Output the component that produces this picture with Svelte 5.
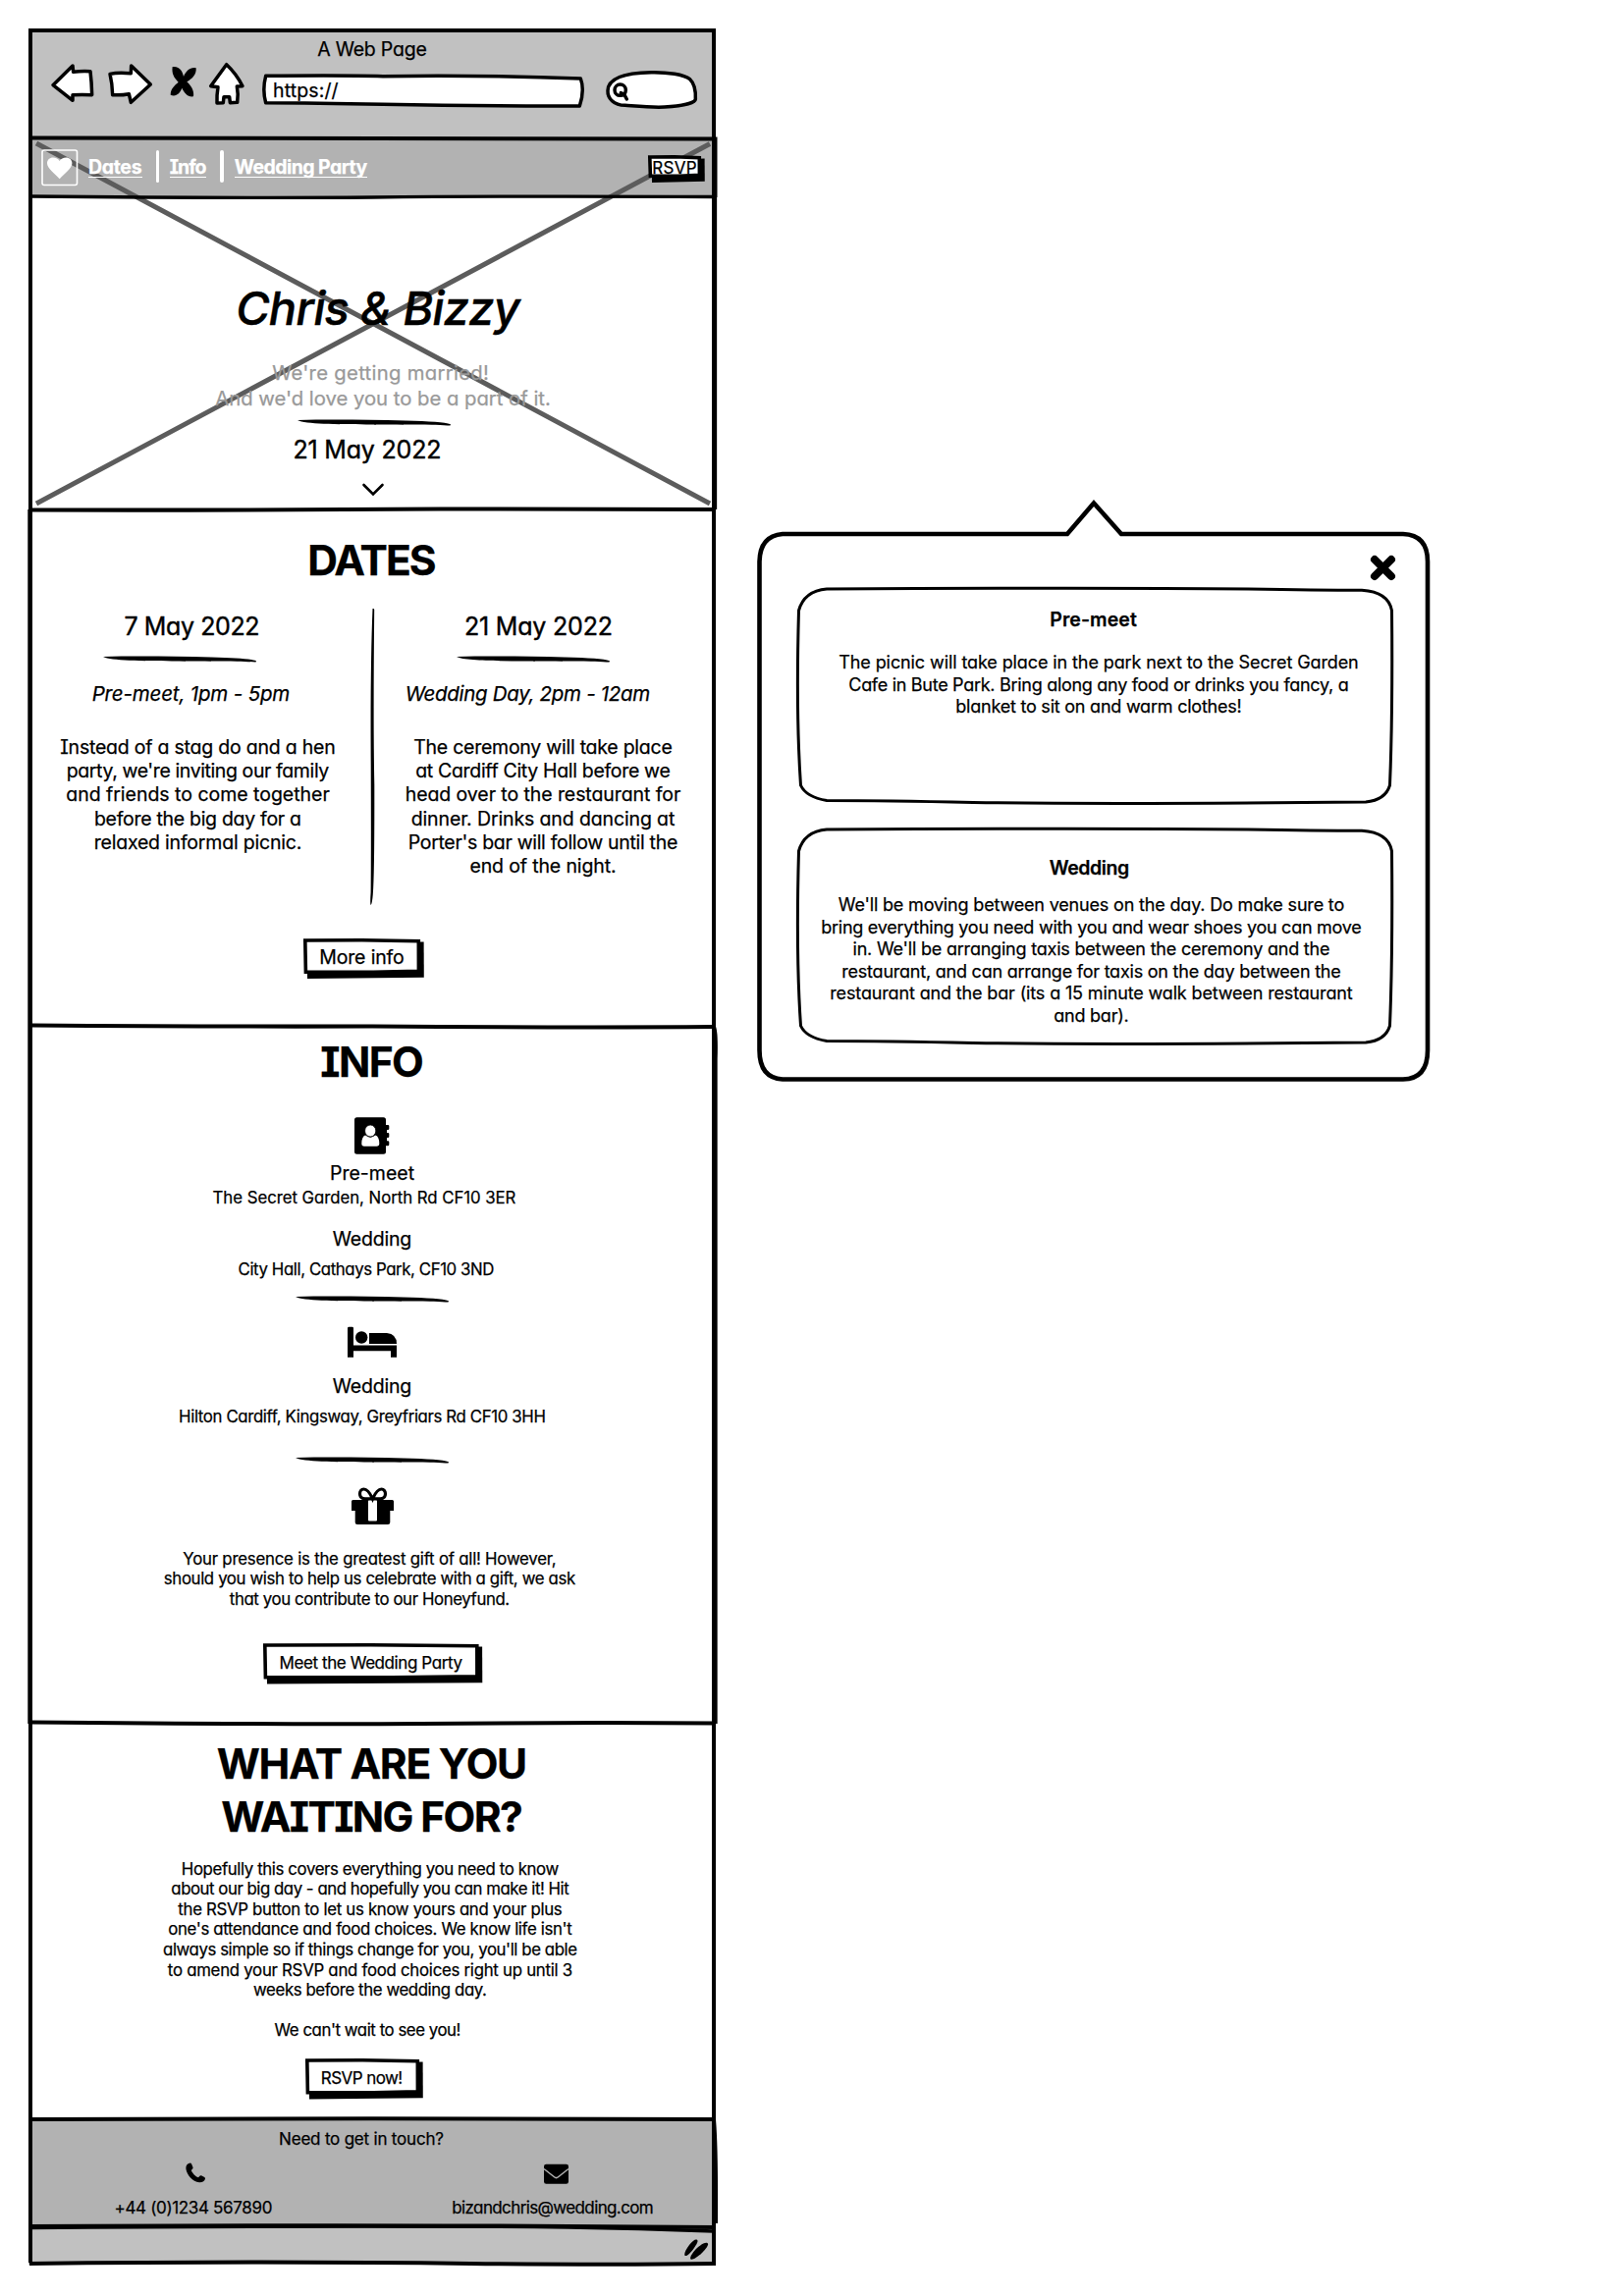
<script>
  // Each line of copy carries the width it should occupy on the wireframe.
  const preMeetCopy = [
    ['Instead of a stag do and a hen', 279],
    ["party, we're inviting our family", 266],
    ['and friends to come together', 267],
    ['before the big day for a', 209.5],
    ['relaxed informal picnic.', 210]
  ];
  const weddingCopy = [
    ['The ceremony will take place', 262],
    ['at Cardiff City Hall before we', 258],
    ['head over to the restaurant for', 279],
    ['dinner. Drinks and dancing at', 267],
    ["Porter's bar will follow until the", 273],
    ['end of the night.', 147.5]
  ];
  const giftCopy = [
    ['Your presence is the greatest gift of all! However,', 379],
    ['should you wish to help us celebrate with a gift, we ask', 418],
    ['that you contribute to our Honeyfund.', 284]
  ];
  const waitingCopy = [
    ['Hopefully this covers everything you need to know', 383],
    ['about our big day - and hopefully you can make it! Hit', 404],
    ['the RSVP button to let us know yours and your plus', 390],
    ["one's attendance and food choices. We know life isn't", 410],
    ["always simple so if things change for you, you'll be able", 420.5],
    ['to amend your RSVP and food choices right up until 3', 411],
    ['weeks before the wedding day.', 236.5]
  ];
  const cards = [
    {
      kind: 'first',
      title: ['Pre-meet', 87],
      lines: [
        ['The picnic will take place in the park next to the Secret Garden', 528],
        ['Cafe in Bute Park. Bring along any food or drinks you fancy, a', 508],
        ['blanket to sit on and warm clothes!', 290]
      ]
    },
    {
      kind: 'second',
      title: ['Wedding', 80],
      lines: [
        ["We'll be moving between venues on the day. Do make sure to", 514],
        ['bring everything you need with you and wear shoes you can move', 549],
        ["in. We'll be arranging taxis between the ceremony and the", 484.5],
        ['restaurant, and can arrange for taxis on the day between the', 507],
        ['restaurant and the bar (its a 15 minute walk between restaurant', 531],
        ['and bar).', 75]
      ]
    }
  ];

  // Spreads or tightens a line's letters so that it fills the given width.
  function fit(node, width) {
    const size = parseFloat(getComputedStyle(node).fontSize);
    const natural = node.getBoundingClientRect().width;
    const count = node.textContent.length;
    const spacing = (width + size * 0.08 - natural) / (count - 1);
    node.style.letterSpacing = `${spacing}px`;
    node.style.marginRight = `${-spacing}px`;
  }
</script>

{#snippet line(text, width)}<span class="fit" use:fit={width}>{text}</span>{/snippet}

{#snippet copy(lines)}
  {#each lines as [text, width]}
    <span class="row">{@render line(text, width)}</span>
  {/each}
{/snippet}

{#snippet squiggle(name)}
  <svg class="squiggle {name}" viewBox="0 0 156 7" width="156" height="7">
    <path d="M0 1C30 .3 70 .5 110 1.600C135 2.300 150 3.200 156 5.200L155.500 6.500C140 5.200 110 5.900 70 5.400C40 5.200 8 5.200 0 1Z" />
  </svg>
{/snippet}

{#snippet sketchButton(name, text, width, w, h)}
  <button class="btn {name}">
    <svg class="btn-ink" viewBox="0 0 {w + 6} {h + 6}" width={w + 6} height={h + 6}>
      <path d="M3.500 5L{w + 3.6} 3.500L{w + 3.8} {h + 3.8}L4 {h + 5}Z" />
      <path class="face" d="M1.800 2L{w / 2} 1.800L{w - 1.700} 2.800L{w - 1.600} {h - 2.700}L{w * 0.6} {h - 1.700}L2.400 {h - 1.800}Z" />
    </svg>
    <span class="btn-label">{@render line(text, width)}</span>
  </button>
{/snippet}

<div class="board">
  <div class="browser">
    <header class="chrome">
      <div class="title">{@render line('A Web Page', 110)}</div>
      <div class="toolbar">
        <svg class="tool" viewBox="90 120 141 150" width="47" height="50">
          <path d="M102 200L162 141L164 160Q190 156 216 158Q220 190 221 230Q190 229 162 230L162 247Q130 222 102 200Z" />
        </svg>
        <svg class="tool forward" viewBox="264 120 147 150" width="49" height="50">
          <path d="M276 166Q300 160 340 164L341 141L400 198L340 253L334 227Q310 232 284 230Q283 195 276 166Z" />
        </svg>
        <svg class="stop" viewBox="456 120 90 150" width="30" height="50">
          <path d="M467 144C489 141 498 158 501 174C508 157 522 144 539 148C541 168 526 182 511 190C524 202 534 218 531 235C514 238 503 224 496 209C490 224 478 238 461 230C461 210 475 200 485 191C472 178 464 165 467 144Z" />
        </svg>
        <svg class="tool home" viewBox="573 120 117 150" width="39" height="50">
          <path d="M632 137L584 203L606 206Q602 230 603 255L622 254L624 236L641 236L643 254L665 253Q669 230 664 204L681 203Q662 165 632 137Z" />
        </svg>
        <div class="url">
          <svg class="tool under" viewBox="738 120 990 150" width="330" height="50">
            <path d="M752 172Q1000 170 1110 173Q1430 169 1714 180Q1727 215 1711 264Q1430 265 1110 259Q900 254 752 254Q741 215 752 172Z" />
          </svg>
          <span class="address">{@render line('https://', 65)}</span>
        </div>
        <svg class="tool search" viewBox="705 120 291 150" width="97" height="50">
          <path d="M770 262C735 262 716 240 717 217C718 175 780 162 850 161C900 160 950 168 968 182C982 195 986 220 985 243C984 256 940 264 890 267C850 269 800 264 770 262Z" />
          <circle cx="755" cy="215" r="17" />
          <path d="M757 224L767 228L775 243" />
        </svg>
      </div>
    </header>

    <nav class="nav">
      <svg class="heart" viewBox="0 0 38 38" width="38" height="38">
        <rect x="1" y="1" width="35.500" height="35.500" rx="2" />
        <path d="M18.700 30.300C14 25 6 19.500 6 14.200C6 10.600 8.600 8.400 12 8.400C15 8.400 17.500 9.800 18.700 12C20 9.800 22.400 8.400 25.400 8.400C28.800 8.400 31.400 10.600 31.400 14.200C31.400 19.500 23.400 25 18.700 30.300Z" />
      </svg>
      <a class="link" href="#dates">{@render line('Dates', 53)}</a>
      <i class="bar"></i>
      <a class="link" href="#info">{@render line('Info', 36)}</a>
      <i class="bar"></i>
      <a class="link" href="#party">{@render line('Wedding Party', 134)}</a>
      {@render sketchButton('rsvp', 'RSVP', 44, 54, 23)}
    </nav>

    <section class="hero">
      <h1>{@render line('Chris & Bizzy', 286)}</h1>
      <p class="tagline">
        <span class="row invite">{@render line("We're getting married!", 219)}</span>
        <span class="row">{@render line("And we'd love you to be a part of it.", 340)}</span>
      </p>
      {@render squiggle('in-hero')}
      <div class="date">{@render line('21 May 2022', 149)}</div>
      <svg class="chevron" viewBox="0 0 22 14" width="22" height="14">
        <path d="M1.500 2L11 11.500L20.500 2" />
      </svg>
    </section>

    <section class="dates" id="dates">
      <h2>{@render line('DATES', 128)}</h2>
      <div class="columns">
        <div class="column left">
          <div class="date">{@render line('7 May 2022', 136)}</div>
          {@render squiggle('in-column')}
          <div class="slot">{@render line('Pre-meet, 1pm - 5pm', 200)}</div>
          <p>{@render copy(preMeetCopy)}</p>
        </div>
        <svg class="divider" viewBox="0 0 15 303" width="15" height="303">
          <path d="M8.500 1Q10 .5 10.200 2Q9 120 10.300 180Q10.500 270 8.800 292Q8 302 6.600 303Q5.800 302 6.600 290Q7 250 6.700 160Q6 60 8.500 1Z" />
        </svg>
        <div class="column right">
          <div class="date">{@render line('21 May 2022', 149)}</div>
          {@render squiggle('in-column')}
          <div class="slot">{@render line('Wedding Day, 2pm - 12am', 248)}</div>
          <p>{@render copy(weddingCopy)}</p>
        </div>
      </div>
      {@render sketchButton('more', 'More info', 85, 119, 36)}
    </section>

    <section class="info" id="info">
      <h2>{@render line('INFO', 102)}</h2>
      <svg class="book" viewBox="0 0 36 38" width="36" height="38">
        <rect x="0" y=".3" width="32" height="37.400" rx="2.500" />
        <path d="M31 8H34Q35.300 8 35.300 9V12Q35.300 13 34 13H33V16H34Q35.300 16 35.300 17V20Q35.300 21 34 21H33V24.300H34Q35.300 24.300 35.300 25.300V28Q35.300 29.300 34 29.300H31Z" />
        <path class="paper" d="M11 18.500Q16.200 22.800 21.500 18.500Q25.300 20 25.300 27Q25.300 29.800 22.500 29.800H10Q7.300 29.800 7.300 27Q7.300 20 11 18.500Z" />
        <ellipse class="paper head" cx="16.200" cy="14" rx="5.600" ry="6" />
      </svg>
      <h3 class="first">{@render line('Pre-meet', 84.5)}</h3>
      <p class="place secret">{@render line('The Secret Garden, North Rd CF10 3ER', 307.5)}</p>
      <h3 class="second">{@render line('Wedding', 79)}</h3>
      <p class="place city">{@render line('City Hall, Cathays Park, CF10 3ND', 259.5)}</p>
      {@render squiggle('after-city')}
      <svg class="bed" viewBox="0 0 50 33" width="50" height="33">
        <path d="M0 2Q0 .8 1.500 .8H4.500Q6 .8 6 2V19.500H50V31.700H44V25.200H6V31.700H0Z" />
        <circle cx="14.200" cy="11.500" r="6.200" />
        <path d="M22 7H40Q50 8 50 18H22Z" />
      </svg>
      <h3 class="third">{@render line('Wedding', 79)}</h3>
      <p class="place hilton">{@render line('Hilton Cardiff, Kingsway, Greyfriars Rd CF10 3HH', 372.5)}</p>
      {@render squiggle('after-hilton')}
      <svg class="gift" viewBox="0 0 43 39" width="43" height="39">
        <path d="M1.500 13H41.500Q43 13 43 14.500V24H39.300V36Q39.300 38 37 38H6Q3.700 38 3.700 36V24H0V14.500Q0 13 1.500 13Z" />
        <rect class="paper" x="17" y="13" width="9" height="21.500" rx="1" />
        <path class="bow" d="M21.500 12C18 4 15 2 12.500 2C7.500 2 6.500 11.500 13.500 11.800H29.500C36.500 11.500 35.500 2 30.500 2C28 2 25 4 21.500 12Z" />
      </svg>
      <p class="small gift-copy">{@render copy(giftCopy)}</p>
      {@render sketchButton('meet', 'Meet the Wedding Party', 185, 219.5, 36.5)}
    </section>

    <section class="waiting">
      <h2>
        <span class="row">{@render line('WHAT ARE YOU', 313)}</span>
        <span class="row">{@render line('WAITING FOR?', 304)}</span>
      </h2>
      <p class="small">{@render copy(waitingCopy)}</p>
      <p class="small see-you">{@render line("We can't wait to see you!", 188.5)}</p>
      {@render sketchButton('now', 'RSVP now!', 82, 116, 36.5)}
    </section>

    <footer class="footer">
      <div class="touch">{@render line('Need to get in touch?', 166.5)}</div>
      <div class="contacts">
        <div class="contact">
          <svg class="phone" viewBox="0 0 20 22" width="20" height="22">
            <path d="M4.500 .5C1.500 1 .1 3 .4 6.500C1.500 13 7 19.500 14 20.300C17 20.500 19.600 19 20 16.500Q20.100 15.500 19.300 15L16 13.200Q15.300 13 14.700 13.500L13 15.300C10 14.300 7 11 5.800 8L7.300 6.300Q7.700 5.700 7.500 5L6 1.300Q5.500 .4 4.500 .5Z" />
          </svg>
          <span class="row">{@render line('+44 (0)1234 567890', 159.5)}</span>
        </div>
        <div class="contact">
          <svg class="mail" viewBox="0 0 25 22" width="25" height="22">
            <rect x="0" y="1.800" width="25" height="20" rx="2.300" />
            <path d="M0 6.500L10.500 14.700Q12.500 16.500 14.500 14.700L25 6.500" />
          </svg>
          <span class="row">{@render line('bizandchris@wedding.com', 204)}</span>
        </div>
      </div>
    </footer>

    <div class="status">
      <svg class="grip" viewBox="0 0 26 22" width="26" height="22">
        <path d="M13.500 1.500C15.500 2 14.500 5 11 10C7.500 15 4 18.500 1.800 18C0 17 2.500 11.500 6 7C9 3 12 1 13.500 1.500Z" />
        <path d="M24.300 5C26.500 6 24 10 19.500 14.500C14 20 9 22.500 7.500 21.500C6 20 9 15 14 10C18.500 6 22.500 4.200 24.300 5Z" />
      </svg>
    </div>

    <svg class="frame" viewBox="0 0 702 2282" width="702" height="2282">
      <path class="cross" d="M8 117L694 484M8 484L694 117.500" />
      <path class="ink" d="M0 2H700M2 0V2276M698 2V2278" />
      <path class="ink" d="M1.500 111.500Q300 113 699.500 112.500V172" />
      <path class="ink thin" d="M2 171Q200 173 350 172Q500 170.500 699.500 171.500" />
      <path class="ink" d="M1 490.500Q200 491 420 489.500Q560 489.500 700 490" />
      <path class="ink thin" d="M699.500 490V172" />
      <path class="ink" d="M1.500 1015.500Q200 1017 350 1016.500Q560 1018 698 1017" />
      <path class="ink thin" d="M698 1016.500Q701 1018 700 1050V1727" />
      <path class="ink" d="M1.300 490V1727" />
      <path class="ink" d="M2 1725.500Q260 1728 400 1727Q560 1725.500 700 1726.500" />
      <path class="ink" d="M2 2130Q350 2128.500 698 2130Q700.500 2160 700 2236" />
      <path class="ink" d="M2 2239Q350 2237.500 550 2239Q650 2240 700 2240" />
      <path class="ink thin" d="M2 2240.500Q350 2238 550 2240Q620 2241 698 2244" />
      <path class="ink" d="M1 2277Q250 2274 450 2277Q600 2278.500 700 2277" />
    </svg>
  </div>

  <aside class="popover">
    <svg class="under" viewBox="0 0 687 595" width="687" height="595">
      <path class="bubble" d="M26 35H316L343 3.500L371 35H658Q683 36 683 63V561Q683 590 658 590.500H26Q2.500 589 2.500 561V63Q3 37 26 35Z" />
    </svg>
    <button class="close" aria-label="Close">
      <svg viewBox="0 0 25 25" width="25" height="25"><path d="M4 4L21 21M21 4L4 21" /></svg>
    </button>
    {#each cards as card}
      <article class="card {card.kind}">
        <svg class="under" viewBox="0 0 608 222" width="608" height="222">
          <path class="outline" d="M31 2Q300 .5 460 2Q530 3.200 576 3.300Q603 5 606.500 24Q607.500 130 604.500 202Q600 217 580 219Q320 221.500 180 219.500Q90 217.500 31 217.500Q10 214 4.500 202Q-.5 130 2.500 24Q8 4 31 2Z" />
        </svg>
        <h4>{@render line(card.title[0], card.title[1])}</h4>
        <p>{@render copy(card.lines)}</p>
      </article>
    {/each}
  </aside>
</div>

<style>
  :global(body) {
    background: #fff;
  }

  .board {
    display: flex;
    align-items: flex-start;
    width: 1654px;
    height: 2339px;
    box-sizing: border-box;
    padding: 29px 0 0 29px;
    color: #000;
    font-family: Inter, 'Open Sans', 'Liberation Sans', sans-serif;
    font-size: 19.5px;
    font-weight: 400;
    line-height: 20px;
    font-feature-settings: 'cv11', 'cv08', 'calt' 0;
    -webkit-text-stroke: 0.25px;
    overflow: hidden;
  }

  h1, h2, h3, h4, p {
    margin: 0;
    font-size: inherit;
    font-weight: inherit;
  }

  svg {
    display: block;
    flex: none;
    overflow: visible;
  }

  .fit {
    display: inline-block;
    white-space: pre;
    translate: 0 1px;
  }

  .row {
    display: block;
    white-space: nowrap;
  }

  .paper {
    fill: #fff;
  }

  .head {
    stroke: #000;
    stroke-width: 0.8;
  }

  .under {
    position: absolute;
    inset: 0 auto auto 0;
  }

  .browser {
    position: relative;
    width: 700px;
    flex: none;
    text-align: center;
  }

  .frame {
    position: absolute;
    inset: 0 auto auto 0;
    pointer-events: none;
  }

  .ink, .cross {
    fill: none;
    stroke: #000;
    stroke-width: 4;
  }

  .thin {
    stroke-width: 3.3;
  }

  .cross {
    stroke: #5c5c5c;
    stroke-width: 5;
  }

  .chrome {
    height: 110px;
    box-sizing: border-box;
    padding-top: 10px;
    background: #c1c1c1;
  }

  .toolbar {
    display: flex;
    height: 50px;
    margin-top: 1px;
    padding-left: 21px;
  }

  .tool {
    fill: #fff;
    stroke: #000;
    stroke-width: 10.5;
    stroke-linejoin: round;
    stroke-linecap: round;
  }

  .forward { margin-left: 11px; }
  .stop { margin-left: 15px; }
  .home { margin-left: 9px; }
  .search { margin-left: 19px; }

  .url {
    position: relative;
    width: 330px;
    height: 50px;
    margin-left: 16px;
    box-sizing: border-box;
    padding: 21px 0 0 12px;
    text-align: left;
  }

  .address {
    position: relative;
    display: block;
  }

  .nav {
    display: flex;
    align-items: center;
    height: 61px;
    box-sizing: border-box;
    padding: 0 15px 0 12.5px;
    background: #b2b2b2;
    color: #fff;
  }

  .heart {
    margin: 3px 10.5px 0 0;
    fill: #fff;
  }

  .heart rect {
    fill: none;
    stroke: #fff;
    stroke-width: 1.6;
  }

  .nav .link, .nav .bar, .heart {
    position: relative;
    z-index: 1;
  }

  .link {
    height: 21px;
    border-bottom: 1.5px solid #fff;
    color: #fff;
    font-weight: 700;
    text-decoration: none;
  }

  .bar {
    width: 3.3px;
    height: 33px;
    margin: 0 11px 0 14px;
    border-radius: 2px;
    background: #fff;
  }

  .btn {
    position: relative;
    z-index: 1;
    display: block;
    padding: 0;
    border: 0;
    background: none;
    color: #000;
    font: inherit;
    font-feature-settings: inherit;
  }

  .btn-ink {
    position: absolute;
    inset: 0 auto auto 0;
  }

  .face {
    fill: #fff;
    stroke: #000;
    stroke-width: 3.6;
  }

  .btn-label {
    position: relative;
    display: block;
  }

  .rsvp {
    width: 54px;
    height: 23px;
    margin-left: auto;
    font-size: 17px;
    font-weight: 400;
  }

  .hero {
    position: relative;
    z-index: 1;
    display: flex;
    flex-direction: column;
    align-items: center;
    height: 319px;
    box-sizing: border-box;
    padding-top: 88px;
  }

  h1 {
    margin-left: 12px;
    font-size: 47px;
    font-style: italic;
    font-weight: 500;
    line-height: 50px;
    -webkit-text-stroke: 0.5px;
  }

  .tagline {
    margin: 28px 0 0 22px;
    color: #999;
    font-size: 20.3px;
    line-height: 26.4px;
  }

  .invite {
    margin-right: 5px;
  }

  .in-hero {
    margin: 8px 0 0 4px;
  }

  .date {
    font-size: 25px;
    line-height: 26px;
    -webkit-text-stroke: 0.4px;
  }

  .hero .date {
    margin: 11px 10px 0 0;
  }

  .chevron {
    margin-top: 21px;
    margin-left: 2px;
    fill: none;
    stroke: #000;
    stroke-width: 2.6;
    stroke-linecap: round;
  }

  h2 {
    font-size: 42.5px;
    font-weight: 700;
    line-height: 44px;
  }

  .dates h2 .fit, .info h2 .fit, .date .fit {
    translate: none;
  }

  .dates {
    height: 526px;
    box-sizing: border-box;
    padding-top: 30px;
  }

  .columns {
    display: grid;
    grid-template-columns: 342px 15px 331px;
    margin-top: 26px;
  }

  .column {
    display: flex;
    flex-direction: column;
    align-items: center;
    padding-top: 6px;
  }

  .column p {
    margin: 30.5px 0 0 3px;
    font-size: 19.5px;
    line-height: 24.35px;
  }

  .in-column {
    margin-top: 17px;
  }

  .slot {
    margin-top: 20px;
    font-size: 20.5px;
    font-style: italic;
    line-height: 22px;
  }

  .left .date { margin-right: 9px; }
  .left .in-column { margin-right: 35px; }
  .left .slot { margin-right: 11px; }
  .right .date { margin-right: 6px; }
  .right .in-column { margin-right: 17px; }
  .right .slot { margin-right: 28px; }

  .more {
    width: 119px;
    height: 36px;
    margin: 34px 0 0 280px;
  }

  .info {
    display: flex;
    flex-direction: column;
    align-items: center;
    height: 710px;
    box-sizing: border-box;
    padding-top: 14.7px;
  }

  .book { margin-top: 34.3px; }

  .first { margin-top: 8px; }
  .second { margin-top: 23.2px; }
  .third { margin-top: 17px; }

  .place {
    font-size: 16.8px;
    line-height: 18px;
  }

  .secret { margin: 5.8px 16px 0 0; }
  .city { margin: 12.2px 12px 0 0; }
  .hilton { margin: 11.8px 20px 0 0; }
  .after-city { margin-top: 18.8px; }
  .after-hilton { margin-top: 33.2px; }
  .bed { margin-top: 24px; }
  .gift { margin-top: 24px; }

  .bow {
    fill: none;
    stroke: #000;
    stroke-width: 3.2;
  }

  .small {
    font-size: 16.8px;
    line-height: 20.6px;
  }

  .gift-copy {
    margin: 22.7px 5px 0 0;
  }

  .meet {
    width: 219.5px;
    height: 36.5px;
    margin: 35.9px 2.5px 0 0;
    font-size: 17px;
  }

  .meet .btn-label {
    margin-top: 1px;
  }

  .waiting {
    display: flex;
    flex-direction: column;
    align-items: center;
    height: 404px;
    box-sizing: border-box;
    padding-top: 14.3px;
  }

  .waiting h2 {
    line-height: 53.7px;
  }

  .waiting .small {
    margin: 16px 4px 0 0;
  }

  .waiting .see-you {
    margin: 20.6px 9px 0 0;
  }

  .now {
    width: 116px;
    height: 36.5px;
    margin: 19.3px 21px 0 0;
    font-size: 17px;
  }

  .footer {
    height: 110px;
    box-sizing: border-box;
    padding-top: 10px;
    background: #b2b2b2;
    font-size: 17px;
    line-height: 18px;
  }

  .touch {
    margin-right: 22px;
  }

  .contacts {
    display: grid;
    grid-template-columns: 336px 332px;
    column-gap: 32px;
    margin-top: 16px;
  }

  .contact {
    display: flex;
    flex-direction: column;
    align-items: center;
    gap: 13.8px;
  }

  .phone { margin-left: 4px; }
  .mail { margin-left: 7px; }

  .mail path {
    fill: none;
    stroke: #b2b2b2;
    stroke-width: 1.5;
  }

  .status {
    display: flex;
    justify-content: flex-end;
    align-items: center;
    height: 38px;
    box-sizing: border-box;
    padding: 6px 7px 0 0;
    background: #c1c1c1;
  }

  .popover {
    position: relative;
    width: 687px;
    height: 595px;
    box-sizing: border-box;
    margin: 480px 0 0 42px;
    padding: 57px 0 0 40px;
    text-align: center;
  }

  .bubble {
    fill: #fff;
    stroke: #000;
    stroke-width: 4.6;
  }

  .close {
    position: relative;
    display: block;
    width: 25px;
    height: 25px;
    margin-left: 585px;
    padding: 0;
    border: 0;
    background: none;
  }

  .close path {
    stroke: #000;
    stroke-width: 8;
    stroke-linecap: round;
  }

  .card {
    position: relative;
    width: 608px;
    height: 222px;
    box-sizing: border-box;
  }

  .card h4, .card p {
    position: relative;
  }

  .first.card {
    margin-top: 7px;
    padding-top: 21.7px;
  }

  .second.card {
    margin-top: 23px;
    padding-top: 30px;
  }

  .outline {
    fill: none;
    stroke: #000;
    stroke-width: 3;
  }

  h4 {
    margin-right: 3px;
    font-weight: 600;
  }

  .second h4 {
    margin-right: 11px;
  }

  .card p {
    font-size: 18px;
    line-height: 22.5px;
  }

  .first p {
    margin: 23.5px 0 0 8px;
  }

  .second p {
    margin: 17px 7px 0 0;
  }
</style>
